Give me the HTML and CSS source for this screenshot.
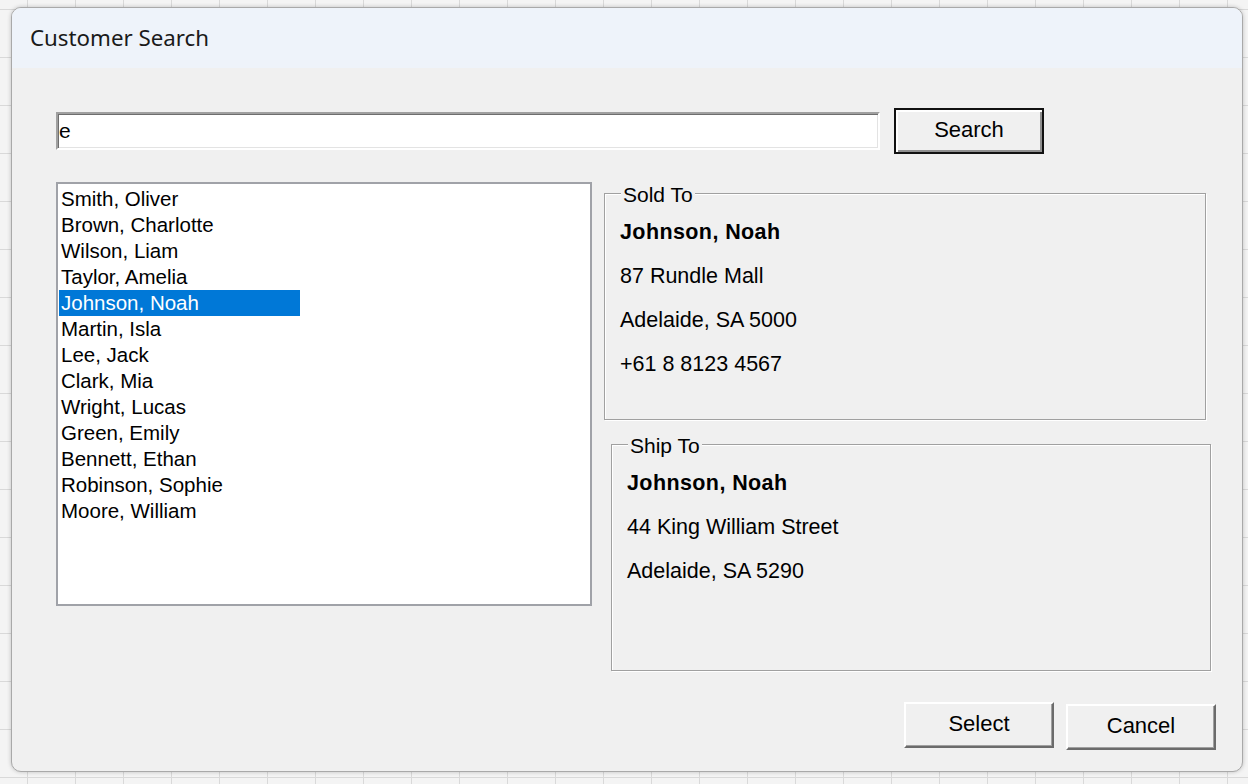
FILE: index.html
```html
<!DOCTYPE html>
<html lang="en">
<head>
<meta charset="utf-8">
<title>Customer Search</title>
<link rel="stylesheet" href="styles.css">
</head>
<body>
<div class="window">
  <div class="titlebar">Customer Search</div>
  <div class="client">
    <div class="search-row">
      <input class="textbox" type="text" value="e">
      <button class="btn btn-default" type="button">Search</button>
    </div>

    <div class="main-row">
      <ul class="listbox">
        <li>Smith, Oliver</li>
        <li>Brown, Charlotte</li>
        <li>Wilson, Liam</li>
        <li>Taylor, Amelia</li>
        <li class="selected">Johnson, Noah</li>
        <li>Martin, Isla</li>
        <li>Lee, Jack</li>
        <li>Clark, Mia</li>
        <li>Wright, Lucas</li>
        <li>Green, Emily</li>
        <li>Bennett, Ethan</li>
        <li>Robinson, Sophie</li>
        <li>Moore, William</li>
      </ul>

      <div class="details">
        <div class="group group-sold">
          <span class="group-label">Sold To</span>
          <p class="name">Johnson, Noah</p>
          <p>87 Rundle Mall</p>
          <p>Adelaide, SA 5000</p>
          <p>+61 8 8123 4567</p>
        </div>
        <div class="group group-ship">
          <span class="group-label">Ship To</span>
          <p class="name">Johnson, Noah</p>
          <p>44 King William Street</p>
          <p>Adelaide, SA 5290</p>
        </div>
      </div>
    </div>

    <div class="button-row">
      <button class="btn btn-select" type="button">Select</button>
      <button class="btn btn-cancel" type="button">Cancel</button>
    </div>
  </div>
</div>
</body>
</html>
```

FILE: styles.css
```css
html, body {
  margin: 0;
  padding: 0;
}

body {
  width: 1248px;
  height: 784px;
  overflow: hidden;
  background-color: #f4f4f4;
  background-image:
    linear-gradient(to right, #d9d9d9 1px, transparent 1px),
    linear-gradient(to bottom, #d9d9d9 1px, transparent 1px);
  background-size: 48px 48px;
  background-position: 27px 9px;
  font-family: "Liberation Sans", Arial, sans-serif;
  color: #000;
}

/* dialog frame */
.window {
  box-sizing: border-box;
  width: 1232px;
  height: 765px;
  margin: 7px 0 0 11px;
  border: 1px solid #a9a9a9;
  border-radius: 10px;
  overflow: hidden;
  background: #f0f0f0;
  box-shadow: 0 0 4px rgba(0, 0, 0, 0.22);
  display: flex;
  flex-direction: column;
}

.titlebar {
  height: 60px;
  flex: none;
  display: flex;
  align-items: center;
  padding: 0 0 2px 18px;
  box-sizing: border-box;
  background: #eef3fa;
  font-family: "Noto Sans", "Open Sans", sans-serif;
  font-size: 22.3px;
  color: #1a1a1a;
}

.client {
  flex: 1;
  padding: 40px 26px 0 44px;
  display: flex;
  flex-direction: column;
}

/* search line */
.search-row {
  display: flex;
  align-items: center;
  gap: 14px;
}

.textbox {
  box-sizing: border-box;
  width: 824px;
  height: 38px;
  margin: 0;
  padding: 0 0 0 1px;
  border: 2px solid;
  border-color: #a0a0a0 #ffffff #ffffff #a0a0a0;
  box-shadow: inset 1px 1px 0 #6e6e6e, inset -1px -1px 0 #e3e3e3;
  background: #fff;
  font-family: "Liberation Sans", Arial, sans-serif;
  font-size: 21px;
  color: #000;
  outline: none;
}

.btn {
  box-sizing: border-box;
  width: 150px;
  height: 46px;
  margin: 0;
  padding: 0 0 2px;
  background: #f0f0f0;
  font-family: "Liberation Sans", Arial, sans-serif;
  font-size: 22px;
  color: #000;
  border: 2px solid;
  border-color: #ffffff #6b6b6b #6b6b6b #ffffff;
  box-shadow: inset -1px -1px 0 #a0a0a0;
  border-radius: 0;
}

.btn-default {
  border: 2px solid #111;
  box-shadow: inset 2px 2px 0 #ffffff, inset -2px -2px 0 #8f8f8f;
}

/* list and address panels */
.main-row {
  display: flex;
  align-items: flex-start;
  margin-top: 28px;
}

.listbox {
  box-sizing: border-box;
  width: 536px;
  height: 424px;
  margin: 0;
  padding: 2px 0 0 1px;
  list-style: none;
  background: #fff;
  border: 2px solid #a0a2a8;
  font-size: 20.5px;
}

.listbox li {
  height: 26px;
  line-height: 26px;
  padding-left: 2px;
  white-space: nowrap;
}

.listbox li.selected {
  width: 239px;
  background: #0078d7;
  color: #fff;
}

.details {
  display: flex;
  flex-direction: column;
  align-items: flex-start;
  margin-left: 12px;
  padding-top: 11px;
}

.group {
  position: relative;
  box-sizing: border-box;
  height: 227px;
  padding: 16px 15px 0;
  border: 1px solid #a0a0a0;
  box-shadow: 1px 1px 0 #ffffff, inset 1px 1px 0 #ffffff;
  font-size: 21.5px;
}

.group-sold {
  width: 602px;
}

.group-ship {
  width: 600px;
  margin-top: 24px;
  margin-left: 7px;
}

.group-label {
  position: absolute;
  top: -11px;
  left: 16px;
  padding: 0 2px;
  line-height: 24px;
  background: #f0f0f0;
  font-size: 21px;
}

.group p {
  margin: 0;
  line-height: 44px;
  white-space: nowrap;
}

.group p.name {
  font-weight: bold;
  letter-spacing: 0.4px;
}

/* dialog buttons */
.button-row {
  display: flex;
  justify-content: flex-end;
  align-items: flex-start;
  gap: 12px;
  margin-top: 31px;
}

.btn-cancel {
  margin-top: 2px;
}
```
